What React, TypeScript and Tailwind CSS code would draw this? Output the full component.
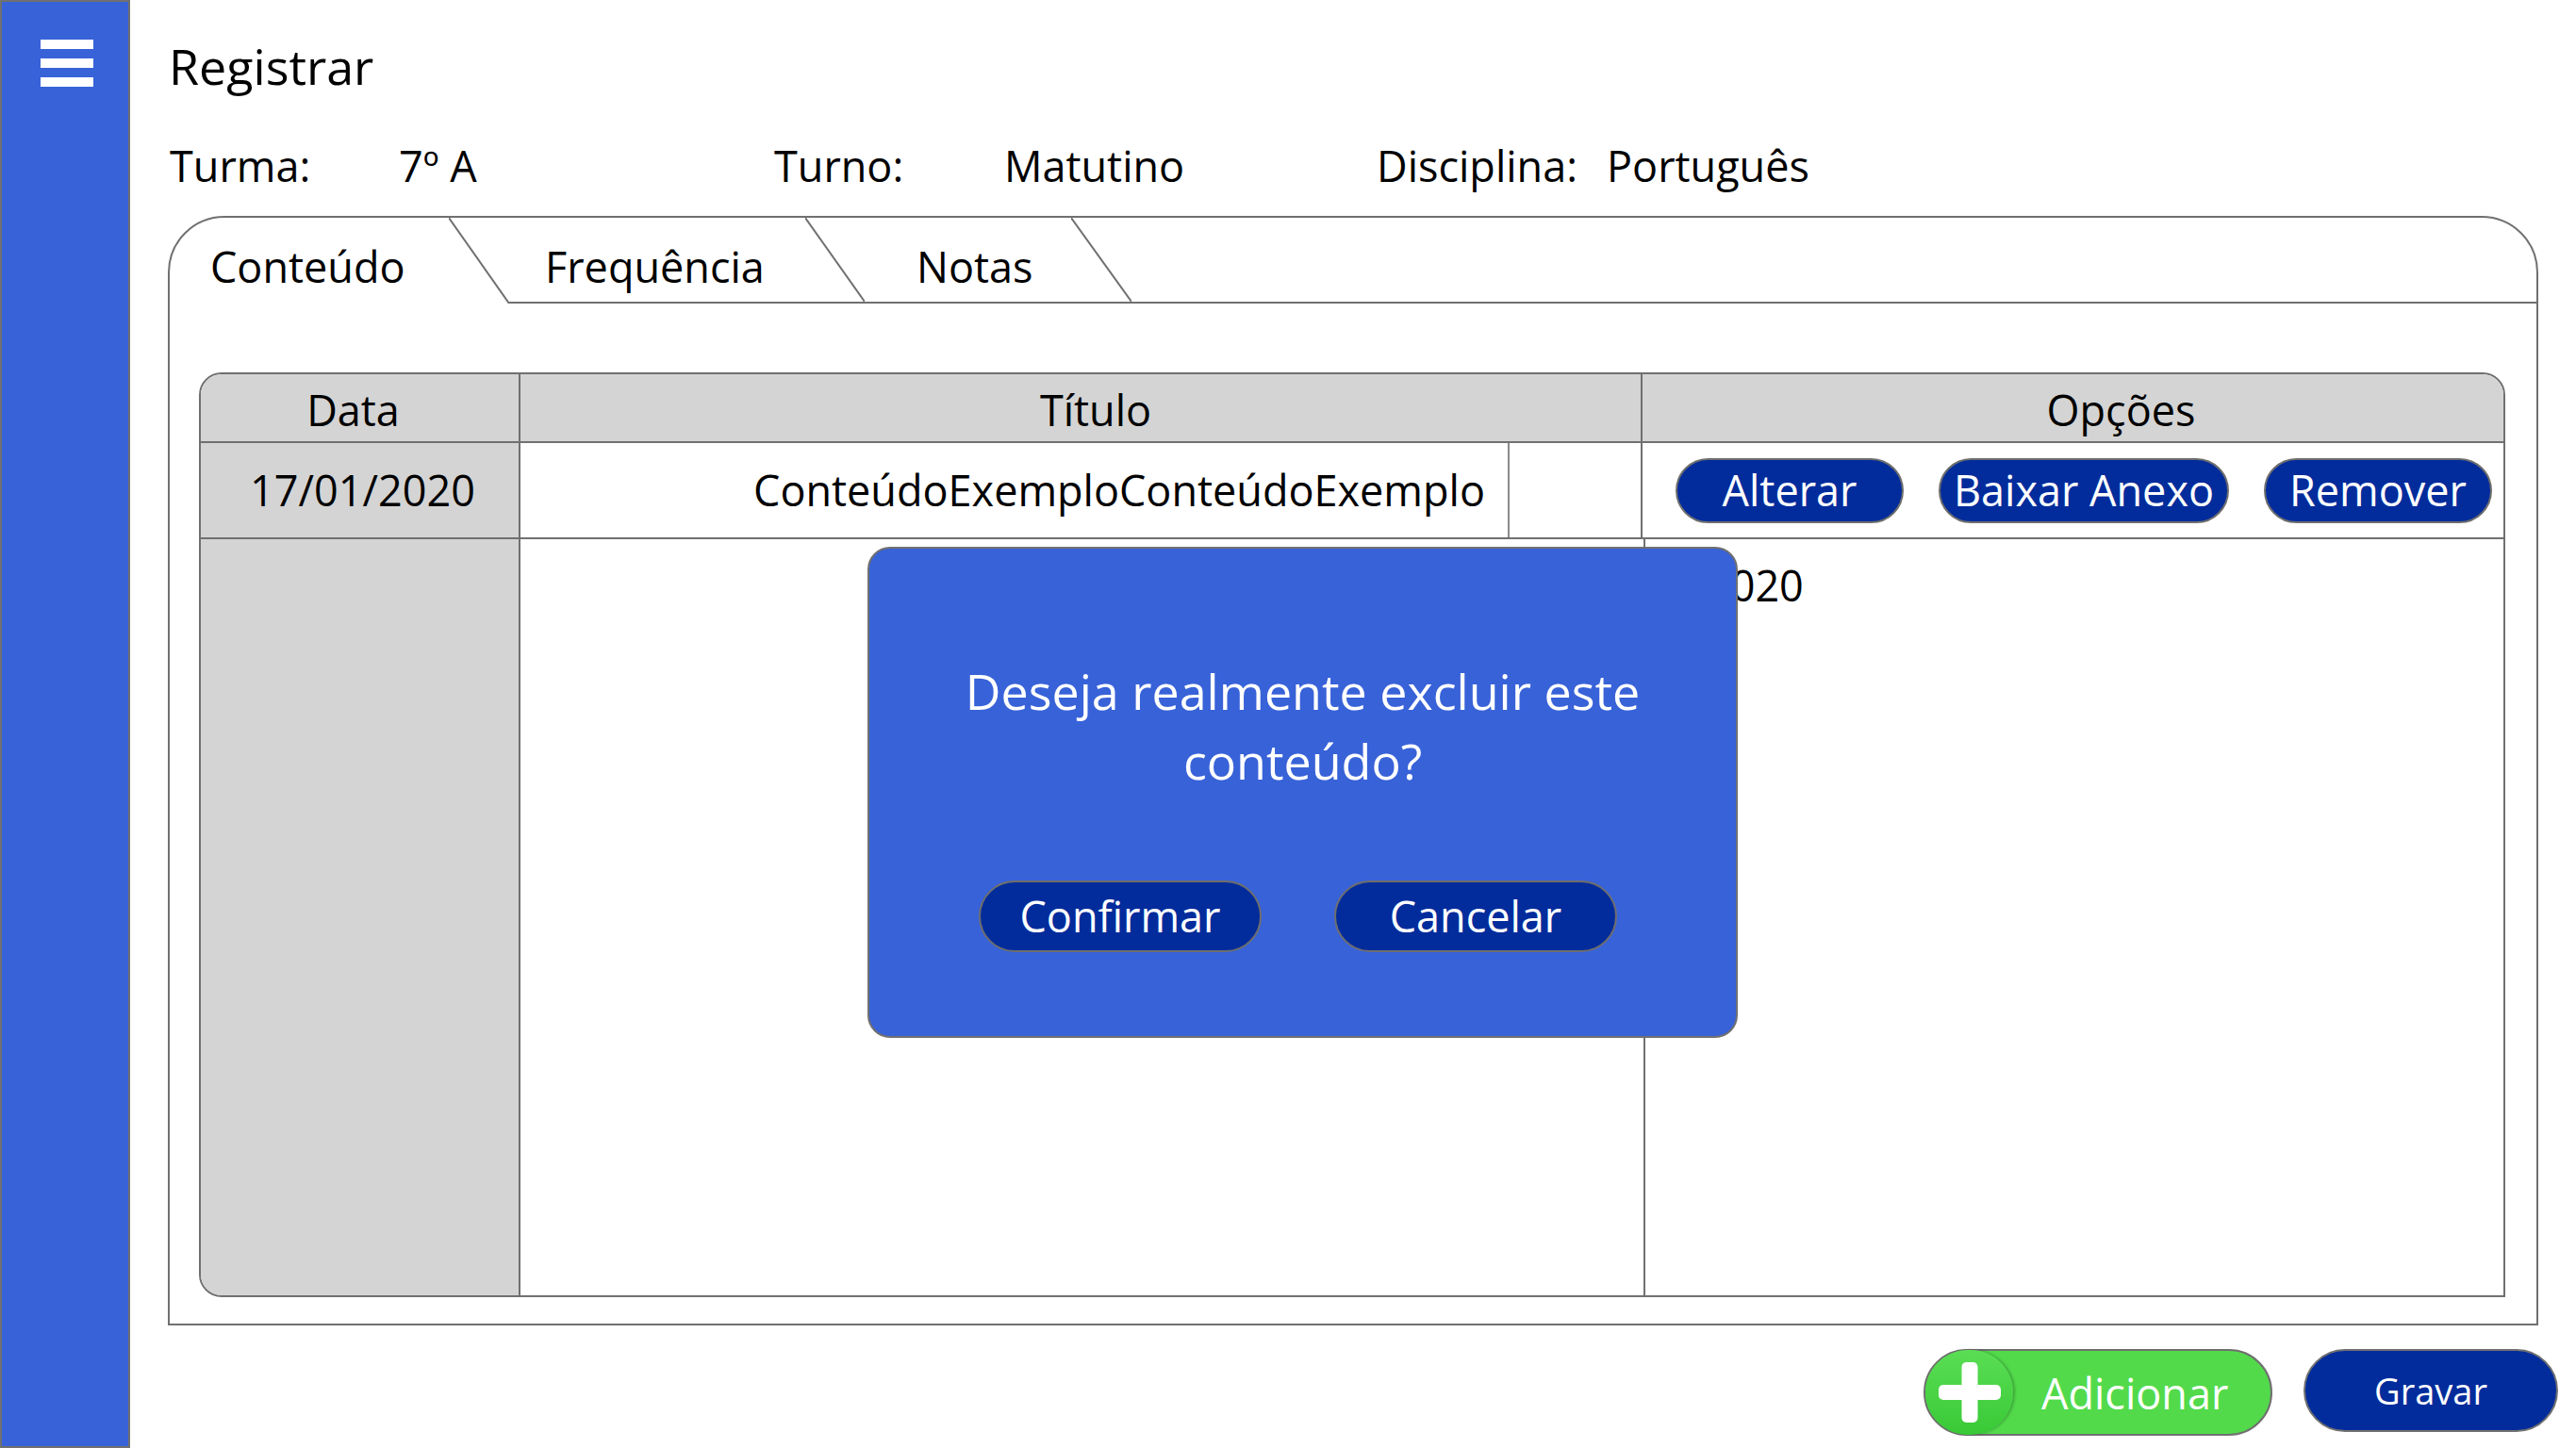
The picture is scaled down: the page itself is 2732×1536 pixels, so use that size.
import React from 'react';

const font = { fontFamily: '"Open Sans", "Noto Sans", sans-serif' };

const Separator: React.FC<{ h: number; w: number }> = ({ h, w }) => (
  <svg width={w} height={h} className="shrink-0 block">
    <line x1={0} y1={0} x2={w} y2={h} stroke="#707070" strokeWidth={2} />
  </svg>
);

const App: React.FC = () => {
  return (
    <div className="relative flex h-[1536px] w-[2732px] overflow-hidden bg-white text-black" style={font}>
      {/* sidebar */}
      <aside className="h-full w-[138px] shrink-0 border-2 border-[#707070] bg-[#3862d8] pl-[41px] pt-[40px]">
        <div className="flex w-[56px] flex-col gap-[10px]">
          <span className="block h-[10px] bg-white" />
          <span className="block h-[10px] bg-white" />
          <span className="block h-[10px] bg-white" />
        </div>
      </aside>

      <main className="flex flex-1 flex-col">
        <h1 className="ml-[41px] mt-[44px] text-[52px] font-normal leading-none">Registrar</h1>

        <div className="ml-[42px] mt-[57px] flex text-[45px] leading-none">
          <span className="w-[243px]">Turma:</span>
          <span className="w-[398px]">7º A</span>
          <span className="w-[244px]">Turno:</span>
          <span className="w-[395px]">Matutino</span>
          <span className="w-[244px]">Disciplina:</span>
          <span>Português</span>
        </div>

        {/* tab panel */}
        <section className="mx-[40px] mt-[31px] flex h-[1177px] flex-col rounded-tl-[60px] rounded-tr-[60px] border-2 border-[#707070]">
          <div className="flex h-[91px] text-[45px] leading-none">
            <div className="w-[296px] shrink-0 pl-[43px] pt-[29px]">Conteúdo</div>
            <Separator w={64} h={91} />
            <div className="flex flex-1 border-b-2 border-[#707070]">
              <div className="w-[314px] shrink-0 pl-[38px] pt-[29px]">Frequência</div>
              <Separator w={63} h={89} />
              <div className="w-[219px] shrink-0 pl-[55px] pt-[29px]">Notas</div>
              <Separator w={64} h={89} />
            </div>
          </div>

          {/* table */}
          <div className="ml-[31px] mr-[33px] mt-[73px] flex h-[981px] flex-col overflow-hidden rounded-tl-[24px] rounded-tr-[24px] rounded-bl-[24px] border-2 border-[#707070] text-[45px] leading-none">
            <div className="flex h-[73px] shrink-0 border-b-2 border-[#707070] bg-[#d4d4d4]">
              <div className="w-[339px] shrink-0 border-r-2 border-[#707070] pr-[14px] pt-[15px] text-center">Data</div>
              <div className="w-[1190px] shrink-0 border-r-2 border-[#707070] pl-[32px] pt-[15px] text-center">Título</div>
              <div className="flex-1 pl-[102px] pt-[15px] text-center">Opções</div>
            </div>

            <div className="flex h-[102px] shrink-0 border-b-2 border-[#707070]">
              <div className="flex w-[339px] shrink-0 items-center justify-center border-r-2 border-[#707070] bg-[#d4d4d4] pb-[2px] pl-[6px]">
                17/01/2020
              </div>
              <div className="flex w-[1190px] shrink-0 border-r-2 border-[#707070]">
                <div className="flex w-[1049px] items-center justify-end border-r-2 border-[#8a8a8a] pb-[2px] pr-[24px]">
                  ConteúdoExemploConteúdoExemplo
                </div>
              </div>
              <div className="flex flex-1 items-center gap-[37px] pl-[35px] text-white">
                <button className="h-[69px] w-[242px] rounded-full border-2 border-[#6e6e6e] bg-[#022c9c] pb-[2px] text-[45px]">Alterar</button>
                <button className="h-[69px] w-[308px] rounded-full border-2 border-[#6e6e6e] bg-[#022c9c] pb-[2px] text-[45px]">Baixar Anexo</button>
                <button className="h-[69px] w-[242px] rounded-full border-2 border-[#6e6e6e] bg-[#022c9c] pb-[2px] text-[45px]">Remover</button>
              </div>
            </div>

            <div className="flex flex-1">
              <div className="w-[339px] shrink-0 border-r-2 border-[#707070] bg-[#d4d4d4]" />
              <div className="w-[1193px] shrink-0 border-r-2 border-[#707070]" />
              <div className="flex-1 pt-[26px]">
                <span className="-ml-[71px] block">17/01/2020</span>
              </div>
            </div>
          </div>
        </section>

        <div className="mr-[19px] mt-[25px] flex justify-end gap-[33px]">
          <button className="flex h-[92px] w-[370px] items-center rounded-full border-2 border-[#707070] bg-[#52da4b] text-white">
            <span className="flex h-[90px] w-[93px] shrink-0 items-center justify-center rounded-full bg-gradient-to-b from-[#5ade54] to-[#38c936] shadow-[2px_0_3px_rgba(0,0,0,0.25)]">
              <svg width="66" height="64" viewBox="0 0 66 64">
                <rect x="24.5" y="0" width="17" height="64" rx="5" fill="#fff" />
                <rect x="0" y="24" width="66" height="16" rx="5" fill="#fff" />
              </svg>
            </span>
            <span className="pl-[30px] text-[45px] leading-none">Adicionar</span>
          </button>
          <button className="h-[88px] w-[270px] rounded-full border-2 border-[#707070] bg-[#022c9c] text-[38px] leading-none text-white">
            Gravar
          </button>
        </div>
      </main>

      {/* confirmation dialog */}
      <div className="absolute left-[920px] top-[580px] flex h-[521px] w-[923px] flex-col items-center rounded-[24px] border-2 border-[#707070] bg-[#3862d8] pt-[114px] text-white">
        <p className="text-center text-[52px] leading-[74px]">
          Deseja realmente excluir este
          <br />
          conteúdo?
        </p>
        <div className="mt-[90px] flex gap-[77px] pr-[10px]">
          <button className="h-[76px] w-[300px] rounded-full border-2 border-[#6e6e6e] bg-[#022c9c] text-[45px]">Confirmar</button>
          <button className="h-[76px] w-[300px] rounded-full border-2 border-[#6e6e6e] bg-[#022c9c] text-[45px]">Cancelar</button>
        </div>
      </div>
    </div>
  );
};

export default App;
